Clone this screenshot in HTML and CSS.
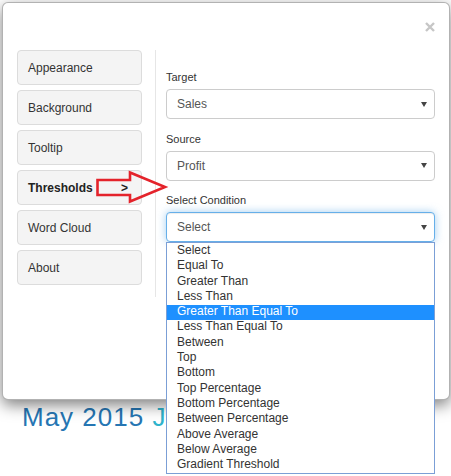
FILE: index.html
```html
<!DOCTYPE html>
<html>
<head>
<meta charset="utf-8">
<link rel="stylesheet" href="styles.css">
</head>
<body>
<div class="page">
  <div class="modal">
    <div class="modal-header">
      <button class="close" aria-label="Close">
        <svg width="10" height="10" viewBox="0 0 10 10"><path d="M1 1 L9 9 M9 1 L1 9" stroke="#c6c6c6" stroke-width="2.4" stroke-linecap="butt"/></svg>
      </button>
    </div>
    <div class="modal-body">
      <nav class="side">
        <div class="tab">Appearance</div>
        <div class="tab">Background</div>
        <div class="tab">Tooltip</div>
        <div class="tab active"><span>Thresholds</span><span class="chev">&gt;</span></div>
        <div class="tab">Word Cloud</div>
        <div class="tab">About</div>
      </nav>
      <div class="content">
        <div class="group">
          <label class="label">Target</label>
          <div class="select"><span>Sales</span><i class="caret"></i></div>
        </div>
        <div class="group">
          <label class="label">Source</label>
          <div class="select"><span>Profit</span><i class="caret"></i></div>
        </div>
        <div class="group">
          <label class="label">Select Condition</label>
          <div class="select focus"><span>Select</span><i class="caret"></i></div>
        </div>
      </div>
    </div>
  </div>
  <h1 class="title">May 2015 <span class="j">J</span></h1>

  <svg class="annot" width="76" height="38" viewBox="0 0 76 38">
    <polygon points="2.5,10 35,10 35,2.5 70,17 35,31.5 35,25 2.5,25" fill="none" stroke="#e4232b" stroke-width="2.6" stroke-linejoin="miter"/>
  </svg>

  <ul class="options">
    <li>Select</li>
    <li>Equal To</li>
    <li>Greater Than</li>
    <li>Less Than</li>
    <li class="hl">Greater Than Equal To</li>
    <li>Less Than Equal To</li>
    <li>Between</li>
    <li>Top</li>
    <li>Bottom</li>
    <li>Top Percentage</li>
    <li>Bottom Percentage</li>
    <li>Between Percentage</li>
    <li>Above Average</li>
    <li>Below Average</li>
    <li>Gradient Threshold</li>
  </ul>
</div>
</body>
</html>
```

FILE: styles.css
```css
* { box-sizing: border-box; }
html, body {
  margin: 0;
  padding: 0;
  background: #fff;
  font-family: "Liberation Sans", Arial, sans-serif;
  color: #333;
}
.page {
  position: relative;
  width: 451px;
  height: 476px;
  overflow: hidden;
}
.modal {
  margin: 2px 0 0 2px;
  width: 448px;
  background: #fff;
  border: 1px solid rgba(0, 0, 0, 0.3);
  border-radius: 6px;
  box-shadow: 0 5px 15px rgba(0, 0, 0, 0.5);
  position: relative;
  z-index: 1;
}
.modal-header {
  height: 47px;
  display: flex;
  justify-content: flex-end;
  align-items: flex-start;
  padding: 19px 14px 0 0;
}
.close {
  border: 0;
  background: none;
  padding: 0;
  margin: 0;
  width: 10px;
  height: 10px;
  display: block;
}
.close svg { display: block; }
.modal-body {
  display: flex;
  padding: 0 0 102px 14px;
}
.side {
  width: 125px;
  margin-right: 13px;
  display: flex;
  flex-direction: column;
  gap: 5px;
}
.tab {
  height: 35px;
  border: 1px solid #dcdcdc;
  border-radius: 4px;
  background: #f4f4f4;
  padding: 0 13px 0 10px;
  display: flex;
  align-items: center;
  font-size: 12px;
  color: #333;
}
.tab.active { font-weight: bold; color: #222; }
.chev { margin-left: auto; }
.content {
  width: 280px;
  height: 247px;
  border-left: 1px solid #e6e6e6;
  padding: 20px 0 0 10px;
}
.group { margin-bottom: 12.5px; }
.label {
  display: block;
  font-size: 11px;
  line-height: 15px;
  margin-bottom: 4px;
  color: #333;
}
.select {
  width: 269px;
  height: 30px;
  border: 1px solid #ccc;
  border-radius: 4px;
  padding: 0 7px 0 10px;
  display: flex;
  align-items: center;
  justify-content: space-between;
  font-size: 12px;
  color: #555;
  background: #fff;
}
.select.focus {
  border-color: #66afe9;
  box-shadow: inset 0 1px 1px rgba(0,0,0,.075), 0 0 8px rgba(102,175,233,.6);
}
.caret {
  width: 0;
  height: 0;
  border-left: 3px solid transparent;
  border-right: 3px solid transparent;
  border-top: 5px solid #444;
}
.title {
  margin: 2px 0 0 0;
  padding-left: 22px;
  font-size: 26px;
  line-height: 30px;
  font-weight: normal;
  letter-spacing: 1px;
  color: #2676b3;
}
.title .j { color: #2fb3cc; }
.annot {
  position: absolute;
  left: 95px;
  top: 170px;
  z-index: 2;
}
.options {
  position: absolute;
  left: 166px;
  top: 242px;
  width: 269px;
  margin: 0;
  padding: 1px 0 0 0;
  list-style: none;
  border: 1px solid #7b9fd6;
  background: #fff;
  z-index: 3;
}
.options li {
  height: 15.3px;
  line-height: 13.3px;
  padding: 0 0 2px 10px;
  font-size: 12px;
  color: #333;
  white-space: nowrap;
}
.options li.hl {
  background: #1e90ff;
  color: #fff;
}
```
